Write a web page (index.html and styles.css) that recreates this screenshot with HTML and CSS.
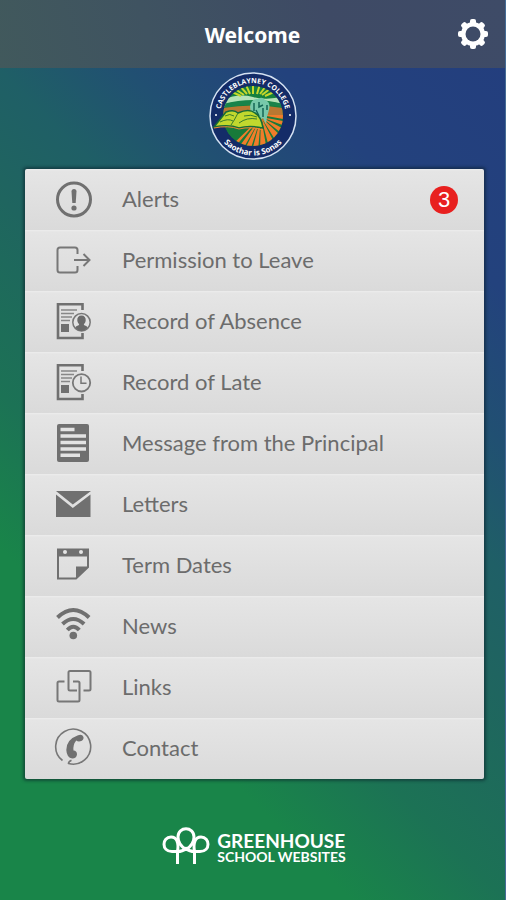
FILE: index.html
```html
<!DOCTYPE html>
<html lang="en">
<head>
<meta charset="utf-8">
<meta name="viewport" content="width=device-width, initial-scale=1">
<title>Welcome</title>
<link rel="stylesheet" href="styles.css">
</head>
<body>
<header class="bar">
  <h1 class="title">Welcome</h1>
  <button class="settings" type="button" aria-label="Settings">
    <svg width="30" height="30" viewBox="0 0 30 30">
      <g fill="#fff">
        <rect x="12" y="0" width="6" height="30" rx="2"/>
        <rect x="12" y="0" width="6" height="30" rx="2" transform="rotate(45 15 15)"/>
        <rect x="12" y="0" width="6" height="30" rx="2" transform="rotate(90 15 15)"/>
        <rect x="12" y="0" width="6" height="30" rx="2" transform="rotate(135 15 15)"/>
        <circle cx="15" cy="15" r="12"/>
      </g>
      <circle cx="15" cy="15" r="7.500" fill="#3e4b67"/>
    </svg>
  </button>
</header>
<main class="content">
  <svg class="crest" width="90" height="90" viewBox="0 0 90 90" role="img" aria-label="Castleblayney College">
    <defs>
      <clipPath id="field"><circle cx="45" cy="45" r="30"/></clipPath>
      <path id="arc-top" d="M12 45a33 33 0 0 1 66 0"/>
      <path id="arc-bottom" d="M5.500 45a39.500 39.500 0 0 0 79 0"/>
    </defs>
    <circle cx="45" cy="45" r="43" fill="#142c68" stroke="#d5e2f2" stroke-width="1.500"/>
    <g clip-path="url(#field)">
      <rect width="90" height="90" fill="#15803d"/>
      <path d="M15 29q15-7 30-3t30-1v8q-30-6-60 3z" fill="#b5e2b8"/>
      <path d="M15 33q30-8 60 0v3q-30-5-60 1z" fill="#19834a"/>
      <path d="M33 25L24 21M36 24L27 18M39 23L32 15M42 23L38 14M45 23V13M49 23L52 13M52 23L58 15M54 24L63 17M57 25L66 21" stroke="#c5d62c" stroke-width="2"/>
      <path d="M15 37q30-5 60 0v9H15z" fill="#b97832"/>
      <path d="M50 44h25v32H15V54z" fill="#187a3a"/>
      <path d="M53 46L20 78h5zM53 46L28 80h6zM53 46L36 80h6zM53 46L44 80h6zM53 46L52 80h7zM53 46L62 80l7-3zM53 46L71 75l6-6zM53 46L78 66v-7zM53 46L80 56v-5zM53 44L80 49v-5z" fill="#f17c2a"/>
      <path d="M42 36q1-9 8-8 4-3 7 1 6 2 4 10l-2 7-1 7-3-6-4 3-2-6-6-1z" fill="#77c9aa"/>
      <path d="M46 32v8m5-9v5l4-2m0 3v9m4-12v5m-11 0l3 6" fill="none" stroke="#146655" stroke-width="1.500"/>
    </g>
    <path d="M6 56l12-15q8-3 12 1 11-5 17 0 6 3 8 15-14-3-24 0-10-4-25-1z" fill="#c1d82e" stroke="#176b36" stroke-width="1.500"/>
    <path d="M30 42q-4 8-7 12m8-2q8-6 18-4M12 51q8-4 13-1M17 45q5-3 9 0m10 0q7-2 13 1" fill="none" stroke="#397d2c" stroke-width="1"/>
    <path d="M6 57q14-3 25 1 12-3 24 1" fill="none" stroke="#f08a32" stroke-width="1"/>
    <g fill="#fff" class="crest-text" text-anchor="middle">
      <text font-size="7"><textPath href="#arc-top" startOffset="50%">CASTLEBLAYNEY COLLEGE</textPath></text>
      <text font-size="8"><textPath href="#arc-bottom" startOffset="50%">Saothar is Sonas</textPath></text>
    </g>
    <circle cx="8" cy="44" r="1" fill="#fff"/><circle cx="82" cy="44" r="1" fill="#fff"/>
  </svg>

  <nav class="menu" aria-label="Main menu">
    <a class="item" href="#alerts">
      <svg class="icon" viewBox="0 0 38 38"><circle cx="19" cy="18.500" r="16.500" fill="none" stroke="#707070" stroke-width="3"/><path d="M16.500 10.500a2.500 2.500 0 0 1 5 0l-.8 11.500h-3.400z" fill="#707070"/><circle cx="19" cy="27" r="2.600" fill="#707070"/></svg>
      <span class="label">Alerts</span><span class="badge">3</span>
    </a>
    <a class="item" href="#permission">
      <svg class="icon" viewBox="0 0 38 38" fill="none" stroke="#777" stroke-width="2"><path d="M22.500 12V8q0-2.500-2.500-2.500H5Q2.500 5.500 2.500 8v20q0 2.500 2.500 2.500h15q2.500 0 2.500-2.500v-4"/><path d="M19 18h15.500M28.500 12l6 6-6 6"/></svg>
      <span class="label">Permission to Leave</span>
    </a>
    <a class="item" href="#absence">
      <svg class="icon" viewBox="0 0 38 38"><path d="M27.500 7V1.300H3V35h24.500v-5" fill="none" stroke="#707070" stroke-width="2.600"/><path d="M6 7h16M6 10.500h13M6 14h11M6 17.500h9" stroke="#888" stroke-width="1.500"/><path d="M6 21h8v8H6z" fill="#707070"/><circle cx="26.500" cy="19.300" r="8.700" fill="#e2e2e2" stroke="#777" stroke-width="1.500"/><path d="M26.500 12.500c-3 0-4.500 2-4.200 5 .2 2 1 3 1.900 3.700-.2 1.500-3.200 1.500-4 3.300 3 4.500 9.600 4.500 12.600 0-.8-1.800-3.800-1.800-4-3.300 1-.7 1.700-1.700 1.900-3.700.3-3-1.200-5-4.200-5z" fill="#6b6b6b"/></svg>
      <span class="label">Record of Absence</span>
    </a>
    <a class="item" href="#late">
      <svg class="icon" viewBox="0 0 38 38"><path d="M27.500 7V1.300H3V35h24.500v-5" fill="none" stroke="#707070" stroke-width="2.600"/><path d="M6 7h16M6 10.500h13M6 14h11M6 17.500h9" stroke="#888" stroke-width="1.500"/><path d="M6 21h8v8H6z" fill="#707070"/><circle cx="26.500" cy="18.800" r="8.700" fill="#e2e2e2" stroke="#777" stroke-width="1.800"/><path d="M26 12.500v6.800h5.500" fill="none" stroke="#777" stroke-width="1.500"/></svg>
      <span class="label">Record of Late</span>
    </a>
    <a class="item" href="#message">
      <svg class="icon" viewBox="0 0 38 38"><rect x="2" y="-1" width="32" height="38" rx="2" fill="#707070"/><path d="M5.500 4.500h14M5.500 11h25.500M5.500 17.500h25.500M5.500 24h25.500M5.500 30.300h19.500" stroke="#e3e3e3" stroke-width="3.600"/></svg>
      <span class="label">Message from the Principal</span>
    </a>
    <a class="item" href="#letters">
      <svg class="icon" viewBox="0 0 38 38"><path d="M1 5h35L17.800 18.500zM1 8.500l16.800 13.500L35.500 8.500V31H1z" fill="#707070"/></svg>
      <span class="label">Letters</span>
    </a>
    <a class="item" href="#dates">
      <svg class="icon" viewBox="0 0 38 38"><path d="M3 3v28.500h18L33 20V3" fill="none" stroke="#707070" stroke-width="2"/><path d="M2 1.500h32v8H2z" fill="#707070"/><path d="M21 32V19.500h13z" fill="#707070"/><circle cx="10" cy="5" r="2" fill="#e5e5e5"/><circle cx="26" cy="5" r="2" fill="#e5e5e5"/></svg>
      <span class="label">Term Dates</span>
    </a>
    <a class="item" href="#news">
      <svg class="icon" viewBox="0 0 38 38"><g fill="none" stroke="#707070" stroke-width="4"><path d="M2.500 9.500q15.800-15 31.600 0"/><path d="M7.500 16q10.800-10 21.600 0"/><path d="M12.300 22q6-6.500 12 0"/></g><circle cx="18.300" cy="27.500" r="3.800" fill="#707070"/></svg>
      <span class="label">News</span>
    </a>
    <a class="item" href="#links">
      <svg class="icon" viewBox="0 0 38 38" fill="none" stroke="#777" stroke-width="2"><path d="M22 21.500h-7q-1.500 0-1.500-1.500V3.500Q13.500 2 15 2h19q1.500 0 1.500 1.500V20q0 1.500-1.500 1.500h-5.500"/><path d="M9.500 12.500H4q-1.500 0-1.500 1.500v17q0 1.500 1.500 1.500h19q1.500 0 1.500-1.500V14q0-1.500-1.500-1.500h-5"/></svg>
      <span class="label">Links</span>
    </a>
    <a class="item" href="#contact">
      <svg class="icon" viewBox="0 0 38 38"><path d="M7.500 30.500A17.500 17.500 0 1 1 13.500 33.500q0-2 3-3.300" fill="none" stroke="#777" stroke-width="1.600"/><path d="M22.500 5.500q4.500-2 6 1.500.5 3.500-3.200 4.300-2.500.5-4-.8-3.500 4-2.800 10 3.500.3 3.500 4-.5 4-4.800 4-5.500-.8-5.900-8.500Q11.300 9.500 22.500 5.500z" fill="#707070"/></svg>
      <span class="label">Contact</span>
    </a>
  </nav>
</main>
<footer class="footer">
  <svg width="48" height="38" viewBox="0 0 48 38" fill="none" stroke="#fff" stroke-width="3" aria-hidden="true">
    <path d="M15.500 37V24.500H10C-1 24.500 0 10 9 10c6 0 8 6 6.500 14.500"/>
    <path d="M32.500 37V24.500H38c11 0 10-14.500 1-14.500-6 0-8 6-6.500 14.500"/>
    <path d="M24 22.500c-5-3-8-8-8-12.500 0-11 16-11 16 0 0 4.500-3 9.500-8 12.500zM15.500 24.500q5 0 8.500-3 3.500 3 8.500 3"/>
  </svg>
  <div class="brand"><span class="brand-name">GREENHOUSE</span><span class="brand-sub">SCHOOL WEBSITES</span></div>
</footer>
</body>
</html>
```
FILE: styles.css
```css
* {
  box-sizing: border-box;
}

body {
  margin: 0;
  min-height: 100vh;
  display: flex;
  flex-direction: column;
  border-right: 1px solid #456c96;
  background: linear-gradient(45deg, #198549 0%, #198549 25%, #1c7255 36%, #1f655f 50%, #1f5f66 59%, #215072 68%, #23427d 79%, #233d7e 100%);
  font-family: Lato, "Liberation Sans", sans-serif;
}

.bar {
  display: grid;
  grid-template-columns: 1fr auto 1fr;
  align-items: center;
  height: 68px;
  padding: 0 17px;
  background: linear-gradient(75deg, #41595c 0%, #3f5361 30%, #3e4a65 65%, #3e4b67 100%);
}

.title {
  grid-column: 2;
  margin: 0;
  padding-top: 2px;
  color: #fff;
  font: 700 21px/28px "Noto Sans", "Open Sans", sans-serif;
}

.settings {
  justify-self: end;
  display: flex;
  padding: 0;
  border: 0;
  background: none;
}

.content {
  display: flex;
  flex-direction: column;
  padding: 3px 21px 0 25px;
}

.crest {
  align-self: center;
  margin: 0 4px 8px 0;
}

.crest-text {
  font-family: "Open Sans", sans-serif;
  font-weight: 700;
}

.menu {
  border-radius: 2px;
  overflow: hidden;
  box-shadow: 0 0 3px 2px rgba(10, 30, 40, 0.5);
}

.item {
  display: flex;
  align-items: center;
  height: 61px;
  padding: 0 26px 0 30px;
  background: linear-gradient(#ededed, #e5e5e5 2px, #dadada);
  color: #6c6c6c;
  font-size: 22px;
  line-height: 28px;
  text-decoration: none;
}

.icon {
  flex: none;
  width: 38px;
  height: 38px;
  margin-right: 29px;
  overflow: visible;
}

.label {
  flex: 1;
  padding-bottom: 2px;
}

.badge {
  width: 28px;
  height: 28px;
  border-radius: 50%;
  background: #e8201f;
  color: #fff;
  font: 22px/28px "Liberation Sans", sans-serif;
  text-align: center;
}

.footer {
  display: flex;
  justify-content: center;
  align-items: center;
  gap: 7px;
  margin-top: 48px;
  padding-left: 3px;
  color: #fff;
}

.brand {
  display: flex;
  flex-direction: column;
  padding-top: 2px;
  font-weight: 700;
}

.brand-name {
  font-size: 19px;
  line-height: 19px;
}

.brand-sub {
  font-size: 14px;
  line-height: 14px;
}
```
